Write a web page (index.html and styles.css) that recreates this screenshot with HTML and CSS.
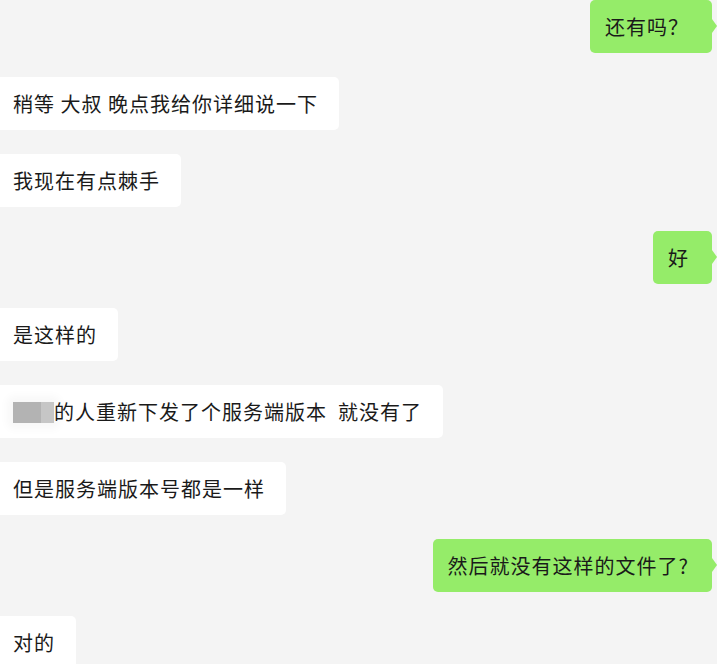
FILE: index.html
```html
<!DOCTYPE html>
<html>
    <head>
        <meta charset="UTF-8">
        <title>聊天记录</title>
        <link rel="stylesheet" href="styles.css">
    </head>
    <body>
        <div class="chat">
            <div class="msg me">还有吗？</div>
            <div class="msg">稍等 大叔 晚点我给你详细说一下</div>
            <div class="msg">我现在有点棘手</div>
            <div class="msg me">好</div>
            <div class="msg">是这样的</div>
            <div class="msg"><span class="mosaic"><i></i><i></i></span>的人重新下发了个服务端版本&nbsp;&nbsp;就没有了</div>
            <div class="msg">但是服务端版本号都是一样</div>
            <div class="msg me">然后就没有这样的文件了?</div>
            <div class="msg">对的</div>
        </div>
    </body>
</html>
```

FILE: styles.css
```css
*{ margin:0; padding:0;}
html,body{
    background: #f4f4f4;
    overflow: hidden;
}
body{
    font-family: "Microsoft YaHei", "Noto Sans CJK SC", sans-serif;
    color: #1a1a1a;
}
.chat{
    display: flex;
    flex-direction: column;
    align-items: flex-start;
    gap: 24px;
}
.msg{
    position: relative;
    background: #fff;
    font-size: 20px;
    letter-spacing: 1px;
    line-height: 27px;
    padding: 13px 21px 13px 19px;
    margin-left: -6px;
    border-radius: 5px;
    white-space: nowrap;
}
.msg.me{
    align-self: flex-end;
    background: #95ec69;
    margin-left: 0;
    margin-right: 5px;
    padding: 13px 23px 13px 15px;
}
.msg.me::after{
    content: "";
    position: absolute;
    right: -5px;
    top: 19px;
    border-left: 5px solid #95ec69;
    border-top: 7px solid transparent;
    border-bottom: 7px solid transparent;
}
.mosaic{
    display: inline-flex;
    vertical-align: -3px;
    width: 41px;
    height: 21px;
    border-radius: 2px;
    box-shadow: 0 0 8px 6px rgba(0,0,0,.03);
}
.mosaic i{
    display: block;
    width: 28px;
    background: #b3b3b3;
}
.mosaic i + i{
    width: 13px;
    background: #c6c6c6;
}
```
